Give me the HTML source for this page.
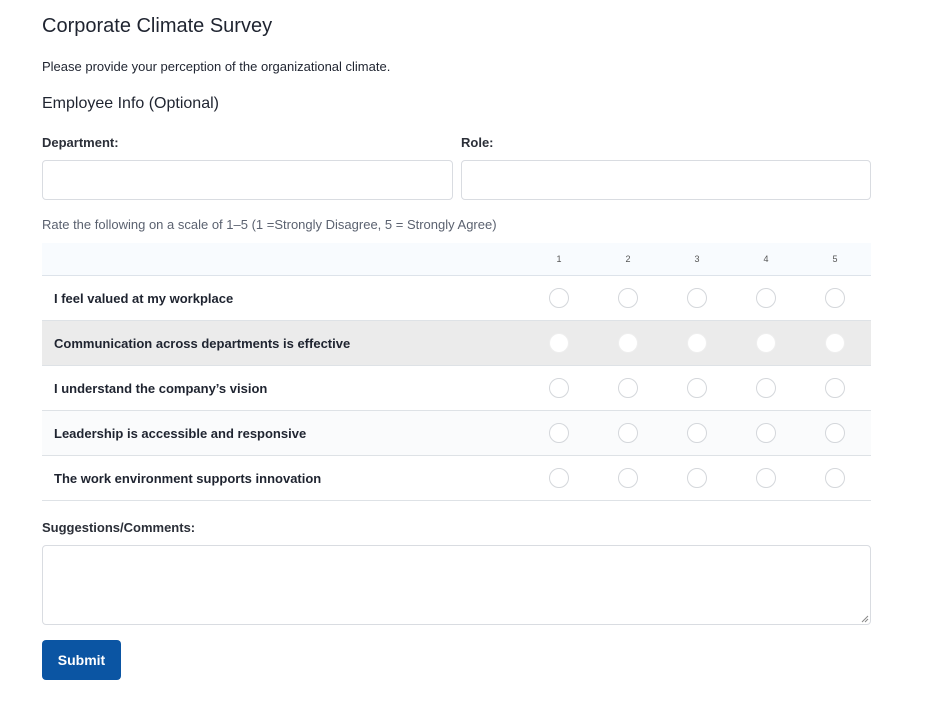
<!DOCTYPE html>
<html><head><meta charset="utf-8"><style>
*{box-sizing:border-box;margin:0;padding:0}
body{width:927px;height:720px;background:#fff;font-family:"Liberation Sans",sans-serif;color:#1f2430;position:relative;overflow:hidden}
.a{position:absolute}
h1{position:absolute;left:42px;top:15px;font-size:20px;font-weight:normal;color:#1f2430}
.p{left:42px;top:59px;font-size:13px}
h3{position:absolute;left:42px;top:95px;font-size:16px;font-weight:normal;color:#1f2430}
.lbl{font-size:13px;font-weight:bold;color:#2b2f38}
.inp{border:1px solid #d9dce1;border-radius:4px;background:#fff}
.scale{left:42px;top:217px;font-size:13px;color:#5b6270}
.tbl{left:42px;top:243px;width:829px}
.hdr{height:33px;background:#f8fbfe;border-bottom:1px solid #dde3ea;position:relative}
.row{height:45px;border-bottom:1px solid #dee2e6;position:relative}
.row .q{position:absolute;left:12px;top:15px;font-size:13px;font-weight:bold;color:#1f2430}
.c{position:absolute;width:20px;height:20px;border-radius:50%;border:1px solid #d4d7db;background:#fff;top:12px}
.n{position:absolute;top:11px;font-size:9px;color:#555;width:20px;text-align:center}
.btn{left:42px;top:640px;width:79px;height:40px;background:#0b55a3;border-radius:4px;color:#fff;font-weight:bold;font-size:14px;text-align:center;line-height:40px}
</style></head><body>
<h1>Corporate Climate Survey</h1>
<div class="a p">Please provide your perception of the organizational climate.</div>
<h3>Employee Info (Optional)</h3>
<div class="a lbl" style="left:42px;top:135px">Department:</div>
<div class="a lbl" style="left:461px;top:135px">Role:</div>
<div class="a inp" style="left:42px;top:160px;width:411px;height:40px"></div>
<div class="a inp" style="left:461px;top:160px;width:410px;height:40px"></div>
<div class="a scale">Rate the following on a scale of 1–5 (1 =Strongly Disagree, 5 = Strongly Agree)</div>
<div class="a tbl">
<div class="hdr"><div class="n" style="left:507px">1</div><div class="n" style="left:576px">2</div><div class="n" style="left:645px">3</div><div class="n" style="left:714px">4</div><div class="n" style="left:783px">5</div></div>
<div class="row"><div class="q">I feel valued at my workplace</div><div class="c" style="left:507px"></div><div class="c" style="left:576px"></div><div class="c" style="left:645px"></div><div class="c" style="left:714px"></div><div class="c" style="left:783px"></div></div>
<div class="row" style="background:#ebebeb"><div class="q">Communication across departments is effective</div><div class="c" style="left:507px;border-color:#eee"></div><div class="c" style="left:576px;border-color:#eee"></div><div class="c" style="left:645px;border-color:#eee"></div><div class="c" style="left:714px;border-color:#eee"></div><div class="c" style="left:783px;border-color:#eee"></div></div>
<div class="row"><div class="q">I understand the company’s vision</div><div class="c" style="left:507px"></div><div class="c" style="left:576px"></div><div class="c" style="left:645px"></div><div class="c" style="left:714px"></div><div class="c" style="left:783px"></div></div>
<div class="row" style="background:#fafbfc"><div class="q">Leadership is accessible and responsive</div><div class="c" style="left:507px"></div><div class="c" style="left:576px"></div><div class="c" style="left:645px"></div><div class="c" style="left:714px"></div><div class="c" style="left:783px"></div></div>
<div class="row"><div class="q">The work environment supports innovation</div><div class="c" style="left:507px"></div><div class="c" style="left:576px"></div><div class="c" style="left:645px"></div><div class="c" style="left:714px"></div><div class="c" style="left:783px"></div></div>
</div>
<div class="a lbl" style="left:42px;top:520px">Suggestions/Comments:</div>
<div class="a inp" style="left:42px;top:545px;width:829px;height:80px"><svg class="a" style="right:1px;bottom:1px" width="8" height="8"><path d="M7 1L1 7M7 4L4 7" stroke="#888" stroke-width="1"/></svg></div>
<div class="a btn">Submit</div>
</body></html>
